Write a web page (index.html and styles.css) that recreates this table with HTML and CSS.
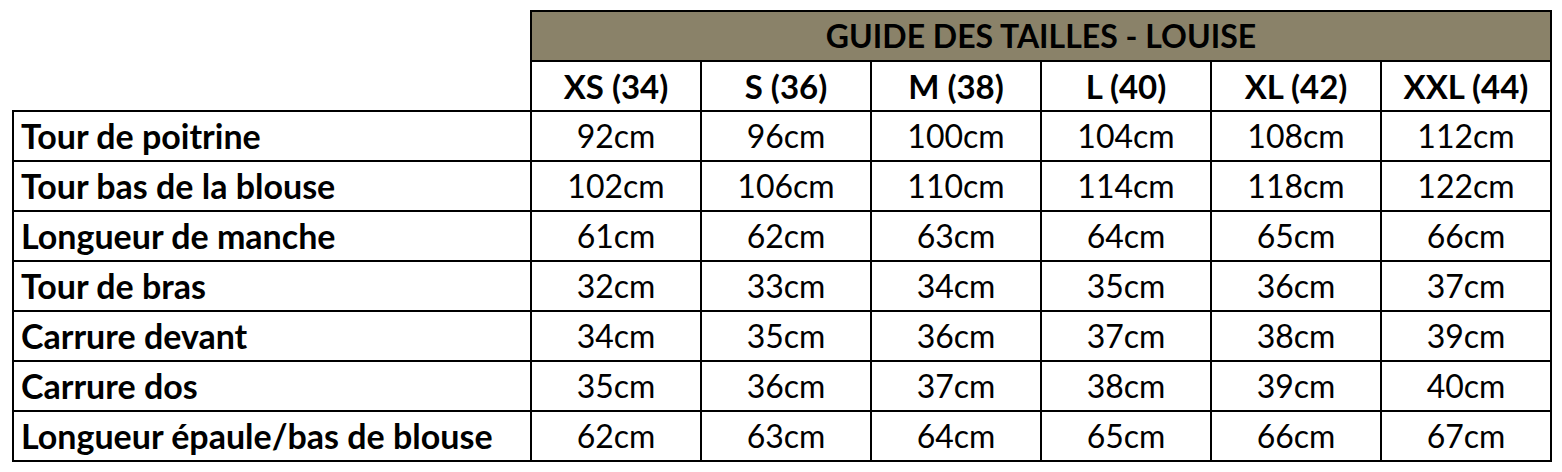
FILE: index.html
```html
<!DOCTYPE html>
<html lang="fr">
<head>
<meta charset="utf-8">
<title>Guide des tailles - Louise</title>
<link rel="stylesheet" href="styles.css">
</head>
<body>
<table class="sizes">
  <colgroup>
    <col class="c-label"><col class="c-size"><col class="c-size"><col class="c-size"><col class="c-size"><col class="c-size"><col class="c-size">
  </colgroup>
  <tr class="r-title">
    <td class="blank" rowspan="2"></td>
    <th class="title" colspan="6">GUIDE DES TAILLES - LOUISE</th>
  </tr>
  <tr class="r-size">
    <th>XS (34)</th><th>S (36)</th><th>M (38)</th><th>L (40)</th><th>XL (42)</th><th>XXL (44)</th>
  </tr>
  <tr><th class="label">Tour de poitrine</th><td>92cm</td><td>96cm</td><td>100cm</td><td>104cm</td><td>108cm</td><td>112cm</td></tr>
  <tr><th class="label">Tour bas de la blouse</th><td>102cm</td><td>106cm</td><td>110cm</td><td>114cm</td><td>118cm</td><td>122cm</td></tr>
  <tr><th class="label">Longueur de manche</th><td>61cm</td><td>62cm</td><td>63cm</td><td>64cm</td><td>65cm</td><td>66cm</td></tr>
  <tr><th class="label">Tour de bras</th><td>32cm</td><td>33cm</td><td>34cm</td><td>35cm</td><td>36cm</td><td>37cm</td></tr>
  <tr><th class="label">Carrure devant</th><td>34cm</td><td>35cm</td><td>36cm</td><td>37cm</td><td>38cm</td><td>39cm</td></tr>
  <tr><th class="label">Carrure dos</th><td>35cm</td><td>36cm</td><td>37cm</td><td>38cm</td><td>39cm</td><td>40cm</td></tr>
  <tr><th class="label">Longueur épaule/bas de blouse</th><td>62cm</td><td>63cm</td><td>64cm</td><td>65cm</td><td>66cm</td><td>67cm</td></tr>
</table>
</body>
</html>
```
FILE: styles.css
```css
html, body {
  margin: 0;
  padding: 0;
  background: #ffffff;
}
body {
  padding: 10px 0 0 12px;
  font-family: "Lato", "Open Sans", sans-serif;
  color: #000;
}
.sizes {
  border-collapse: collapse;
  table-layout: fixed;
  width: 1540px;
}
.c-label { width: 518px; }
.c-size { width: 170px; }
.sizes tr { height: 50px; }
.sizes th, .sizes td {
  border: 2px solid #000;
  padding: 0;
  font-size: 32px;
  line-height: 1;
  text-align: center;
  vertical-align: middle;
  font-weight: 400;
}
.sizes th {
  font-weight: 700;
  font-size: 33px;
}
.sizes .blank {
  border-top: none;
  border-left: none;
  border-right: 2px solid #000;
  border-bottom: 2px solid #000;
}
.sizes .title {
  background: #8a8269;
  font-size: 32px;
}
.sizes .label {
  text-align: left;
  padding-left: 7px;
  font-size: 34px;
}
```
